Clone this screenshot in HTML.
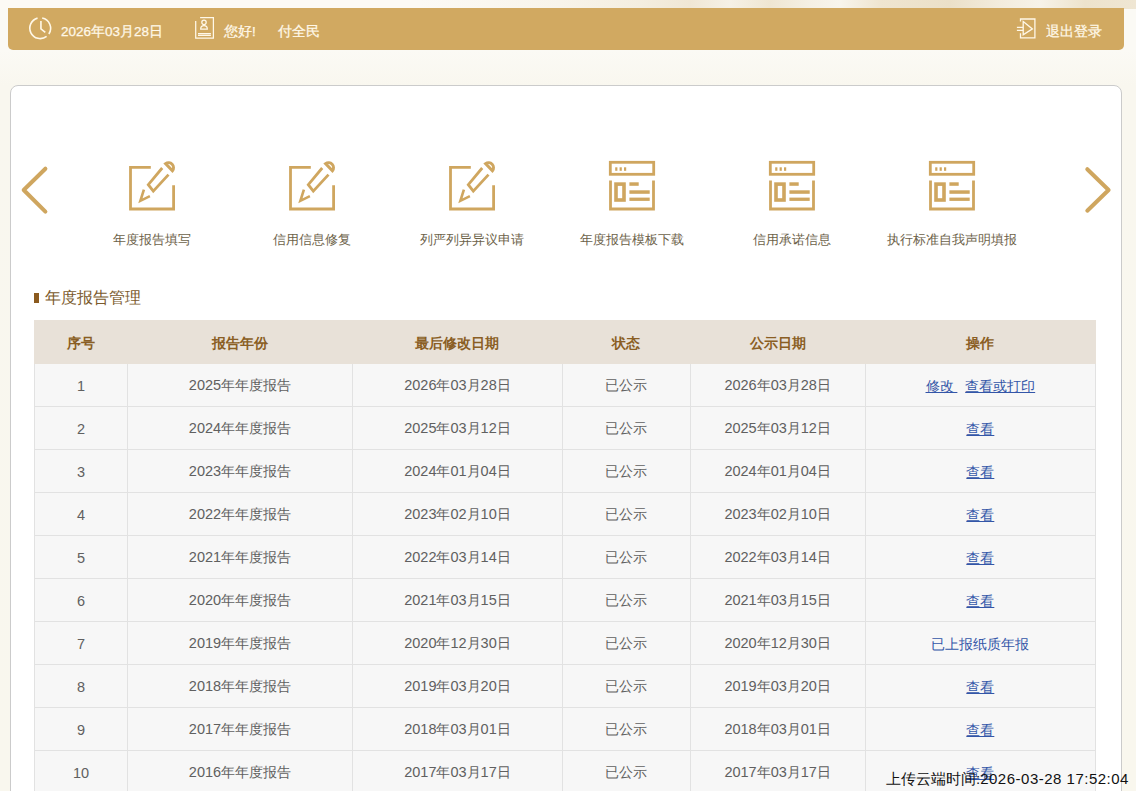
<!DOCTYPE html>
<html><head><meta charset="utf-8">
<style>
*{margin:0;padding:0;box-sizing:border-box}
html,body{width:1136px;height:791px;overflow:hidden}
body{background:linear-gradient(180deg,#fbfaf5 50px,#f9f7ef 85px,#f9f7ee 791px);font-family:"Liberation Sans",sans-serif;position:relative;color:#555}
.topdeco{position:absolute;left:0;top:0;width:1136px;height:9px;background:linear-gradient(90deg,#fcfaf5 0,#fcfaf5 420px,#f8f4ea 560px,#f4eee0 640px,#f0e7d5 690px,#f6f1e6 730px,#efe6d2 770px,#f5f0e4 810px,#f8f5ec 840px,#efe5d0 880px,#ebe0c8 950px,#f3ecdd 1000px,#f7f3e9 1040px,#ede3cc 1085px,#efe6d3 1136px)}
.bar{position:absolute;left:8px;top:8px;width:1116px;height:42px;background:#d1a961;border-radius:0 0 5px 5px;color:#fff8e8;font-size:14px}
.bar .t{position:absolute;top:15px;line-height:18px;white-space:nowrap;font-size:13.5px;-webkit-text-stroke:0.25px #fff8e8}
.card{position:absolute;left:10px;top:85px;width:1112px;height:760px;background:#fff;border:1px solid #cbcbcb;border-radius:8px}
.ic{position:absolute;top:0;left:0}
.lbl{position:absolute;top:231px;width:160px;text-align:center;font-size:13px;color:#6c6249;line-height:18px}
.title{position:absolute;left:34px;top:288px;font-size:16px;color:#7b5a2c;line-height:20px}
.title:before{content:"";position:absolute;left:0;top:5px;width:5px;height:10px;background:#8b5a1e}
.title span{margin-left:11px}
table{position:absolute;left:34px;top:319.5px;width:1062px;border-collapse:collapse;font-size:14px}
th{background:#e8e1d8;color:#8a5e24;font-weight:bold;height:43px;border:1px solid #e8e1d8;padding-top:5px}
td{background:#f7f7f7;border:1px solid #e2e2e2;height:43px;text-align:center;color:#606060;font-size:14px;padding-top:2px}
td i{font-style:normal;font-size:14.5px}
a,.blue{color:#3356a8;font-size:14px;position:relative;top:1px}a{text-decoration:underline}
.wm{position:absolute;left:886px;top:769px;font-size:15px;color:#111;white-space:nowrap;line-height:20px}.wm span{letter-spacing:0.5px}
</style></head><body>
<div class="topdeco"></div>
<div class="bar">
  <svg class="ic" width="60" height="42" viewBox="0 0 60 42"><g fill="none" stroke="#fff8e8" stroke-width="1.6"><path d="M29.56 10.14 A10.4 10.4 0 1 0 38.6 28.4"/><path d="M34.18 9.99 A10.4 10.4 0 0 1 40.85 25.97"/><path d="M32.94 12.9 V20.9 L37.3 24.4"/></g></svg>
  <div class="t" style="left:53px">2026年03月28日</div>
  <svg class="ic" style="left:185px" width="24" height="42" viewBox="0 0 24 42"><g fill="none" stroke="#fff8e8" stroke-width="1.25"><path d="M7.1 9.5 H20.4 V30 H2.7 V12.9"/><circle cx="11" cy="14.3" r="2.2"/><path d="M7.7 21 Q7.7 17.7 11 17.7 Q14.3 17.7 14.3 21 Z"/><path d="M5 25.5 H17.9 M5 27.4 H17.9"/></g></svg>
  <div class="t" style="left:216px">您好!</div>
  <div class="t" style="left:270px">付全民</div>
  <svg class="ic" style="left:1005px" width="34" height="42" viewBox="0 0 34 42"><g fill="none" stroke="#fff8e8" stroke-width="1.3"><path d="M7.5 13.6 V11 H21.9 V29.8 H7.5 V25.2"/><path d="M3.9 19.4 H10.2 M3.9 22.3 H10.2"/><path d="M10.2 13.6 L19.4 20.9 L10.2 26.7 Z"/></g></svg>
  <div class="t" style="left:1038px">退出登录</div>
</div>
<div class="card"></div>
<svg class="ic" width="1136" height="260" viewBox="0 0 1136 260" style="position:absolute;left:0;top:0"><g fill="none" stroke="#cfa65f" stroke-width="4" stroke-linecap="round" stroke-linejoin="round"><path d="M45.4 168.7 L23.7 190 L45.4 211.7"/><path d="M1087.3 169.2 L1108.6 190 L1087.3 210.7"/></g><g transform="translate(0 0)" fill="none" stroke="#cfa65f" stroke-width="2.8"><path d="M150.8 167.4 H130.5 V209 H173.6 V185.2"/><path d="M162.2 168.0 L148.3 184.7 L153.3 191.1 L168.5 174.6"/><path d="M143.9 189.6 L140.4 200.8 L149.9 196.1" stroke-width="2.6"/><path d="M165.6 163.6 A5 5 0 0 1 172.4 170.8 Z" stroke-width="3"/></g><g transform="translate(160 0)" fill="none" stroke="#cfa65f" stroke-width="2.8"><path d="M150.8 167.4 H130.5 V209 H173.6 V185.2"/><path d="M162.2 168.0 L148.3 184.7 L153.3 191.1 L168.5 174.6"/><path d="M143.9 189.6 L140.4 200.8 L149.9 196.1" stroke-width="2.6"/><path d="M165.6 163.6 A5 5 0 0 1 172.4 170.8 Z" stroke-width="3"/></g><g transform="translate(320 0)" fill="none" stroke="#cfa65f" stroke-width="2.8"><path d="M150.8 167.4 H130.5 V209 H173.6 V185.2"/><path d="M162.2 168.0 L148.3 184.7 L153.3 191.1 L168.5 174.6"/><path d="M143.9 189.6 L140.4 200.8 L149.9 196.1" stroke-width="2.6"/><path d="M165.6 163.6 A5 5 0 0 1 172.4 170.8 Z" stroke-width="3"/></g><g transform="translate(0 0)" fill="none" stroke="#cfa65f" stroke-width="2.8"><rect x="610.3" y="162.3" width="43.4" height="12"/><path d="M610.5 180.5 V209 H653.5 V180.5"/><rect x="616" y="184.1" width="8" height="15.9" stroke-width="3.6"/><g fill="#cfa65f" stroke="none"><rect x="615.2" y="167.3" width="2.2" height="3.5"/><rect x="619.6" y="167.3" width="2.2" height="3.5"/><rect x="624" y="167.3" width="2.2" height="3.5"/><rect x="629.4" y="182.3" width="9.3" height="3.5"/><rect x="629.4" y="190.3" width="20.3" height="3.5"/><rect x="629.4" y="197.6" width="20.3" height="3.3"/></g></g><g transform="translate(160 0)" fill="none" stroke="#cfa65f" stroke-width="2.8"><rect x="610.3" y="162.3" width="43.4" height="12"/><path d="M610.5 180.5 V209 H653.5 V180.5"/><rect x="616" y="184.1" width="8" height="15.9" stroke-width="3.6"/><g fill="#cfa65f" stroke="none"><rect x="615.2" y="167.3" width="2.2" height="3.5"/><rect x="619.6" y="167.3" width="2.2" height="3.5"/><rect x="624" y="167.3" width="2.2" height="3.5"/><rect x="629.4" y="182.3" width="9.3" height="3.5"/><rect x="629.4" y="190.3" width="20.3" height="3.5"/><rect x="629.4" y="197.6" width="20.3" height="3.3"/></g></g><g transform="translate(320 0)" fill="none" stroke="#cfa65f" stroke-width="2.8"><rect x="610.3" y="162.3" width="43.4" height="12"/><path d="M610.5 180.5 V209 H653.5 V180.5"/><rect x="616" y="184.1" width="8" height="15.9" stroke-width="3.6"/><g fill="#cfa65f" stroke="none"><rect x="615.2" y="167.3" width="2.2" height="3.5"/><rect x="619.6" y="167.3" width="2.2" height="3.5"/><rect x="624" y="167.3" width="2.2" height="3.5"/><rect x="629.4" y="182.3" width="9.3" height="3.5"/><rect x="629.4" y="190.3" width="20.3" height="3.5"/><rect x="629.4" y="197.6" width="20.3" height="3.3"/></g></g></svg>
<div class="lbl" style="left:72px">年度报告填写</div>
<div class="lbl" style="left:232px">信用信息修复</div>
<div class="lbl" style="left:392px">列严列异异议申请</div>
<div class="lbl" style="left:552px">年度报告模板下载</div>
<div class="lbl" style="left:712px">信用承诺信息</div>
<div class="lbl" style="left:872px">执行标准自我声明填报</div>
<div class="title"><span>年度报告管理</span></div>
<table><colgroup><col style="width:93px"><col style="width:225.3px"><col style="width:210.2px"><col style="width:127.8px"><col style="width:175.2px"><col style="width:230.5px"></colgroup><tr><th>序号</th><th>报告年份</th><th>最后修改日期</th><th>状态</th><th>公示日期</th><th>操作</th></tr><tr><td><i>1</i></td><td><i>2025</i>年年度报告</td><td><i>2026</i>年<i>03</i>月<i>28</i>日</td><td>已公示</td><td><i>2026</i>年<i>03</i>月<i>28</i>日</td><td><a>修改 </a>&nbsp;&nbsp;<a>查看或打印</a></td></tr><tr><td><i>2</i></td><td><i>2024</i>年年度报告</td><td><i>2025</i>年<i>03</i>月<i>12</i>日</td><td>已公示</td><td><i>2025</i>年<i>03</i>月<i>12</i>日</td><td><a>查看</a></td></tr><tr><td><i>3</i></td><td><i>2023</i>年年度报告</td><td><i>2024</i>年<i>01</i>月<i>04</i>日</td><td>已公示</td><td><i>2024</i>年<i>01</i>月<i>04</i>日</td><td><a>查看</a></td></tr><tr><td><i>4</i></td><td><i>2022</i>年年度报告</td><td><i>2023</i>年<i>02</i>月<i>10</i>日</td><td>已公示</td><td><i>2023</i>年<i>02</i>月<i>10</i>日</td><td><a>查看</a></td></tr><tr><td><i>5</i></td><td><i>2021</i>年年度报告</td><td><i>2022</i>年<i>03</i>月<i>14</i>日</td><td>已公示</td><td><i>2022</i>年<i>03</i>月<i>14</i>日</td><td><a>查看</a></td></tr><tr><td><i>6</i></td><td><i>2020</i>年年度报告</td><td><i>2021</i>年<i>03</i>月<i>15</i>日</td><td>已公示</td><td><i>2021</i>年<i>03</i>月<i>15</i>日</td><td><a>查看</a></td></tr><tr><td><i>7</i></td><td><i>2019</i>年年度报告</td><td><i>2020</i>年<i>12</i>月<i>30</i>日</td><td>已公示</td><td><i>2020</i>年<i>12</i>月<i>30</i>日</td><td><span class="blue">已上报纸质年报</span></td></tr><tr><td><i>8</i></td><td><i>2018</i>年年度报告</td><td><i>2019</i>年<i>03</i>月<i>20</i>日</td><td>已公示</td><td><i>2019</i>年<i>03</i>月<i>20</i>日</td><td><a>查看</a></td></tr><tr><td><i>9</i></td><td><i>2017</i>年年度报告</td><td><i>2018</i>年<i>03</i>月<i>01</i>日</td><td>已公示</td><td><i>2018</i>年<i>03</i>月<i>01</i>日</td><td><a>查看</a></td></tr><tr><td><i>10</i></td><td><i>2016</i>年年度报告</td><td><i>2017</i>年<i>03</i>月<i>17</i>日</td><td>已公示</td><td><i>2017</i>年<i>03</i>月<i>17</i>日</td><td><a>查看</a></td></tr></table>
<div class="wm">上传云端时间:<span>2026-03-28 17:52:04</span></div>
</body></html>
